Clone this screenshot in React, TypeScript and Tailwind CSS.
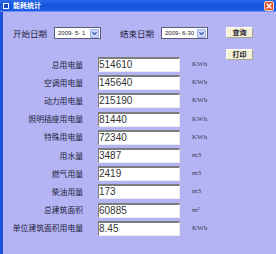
import { ChevronDown, X } from "lucide-react";

type Row = {
  label: string;
  value: string;
  unit: string;
};

const rows: Row[] = [
  { label: "总用电量", value: "514610", unit: "KWh" },
  { label: "空调用电量", value: "145640", unit: "KWh" },
  { label: "动力用电量", value: "215190", unit: "KWh" },
  { label: "照明插座用电量", value: "81440", unit: "KWh" },
  { label: "特殊用电量", value: "72340", unit: "KWh" },
  { label: "用水量", value: "3487", unit: "m3" },
  { label: "燃气用量", value: "2419", unit: "m3" },
  { label: "柴油用量", value: "173", unit: "m3" },
  { label: "总建筑面积", value: "60885", unit: "m²" },
  { label: "单位建筑面积用电量", value: "8.45", unit: "KWh" },
];

const cjk = "font-['Noto_Sans_CJK_SC','Liberation_Sans',sans-serif]";

// small date combo box, xp style
function DateBox({ value }: { value: string }) {
  return (
    <div className="w-[47px] h-[12px] flex items-center bg-white border border-[#5a5a7a]">
      <span className="flex-1 pl-[3px] text-[6px] leading-none text-[#222] font-['Liberation_Sans',sans-serif] whitespace-pre">
        {value}
      </span>
      <div className="w-[9px] h-[9px] mr-[1px] rounded-[1px] bg-[#c6d4f7] border border-[#9fb4ea] grid place-items-center">
        <ChevronDown className="w-[7px] h-[7px] text-[#3050a8]" strokeWidth={4} />
      </div>
    </div>
  );
}

function XpButton({ text }: { text: string }) {
  return (
    <div
      className={`w-[27px] h-[11px] grid place-items-center bg-[#f3f0d6] border-t border-l border-[#fffdf0] border-r border-b border-r-[#a9a690] border-b-[#a9a690] text-[7px] leading-none font-bold text-[#1a1a30] ${cjk}`}
    >
      {text}
    </div>
  );
}

export default function App() {
  return (
    <div className="w-[276px] h-[254px] flex flex-col bg-[#b4b4f4] overflow-hidden">
      {/* title bar */}
      <div className="h-[12px] flex items-center bg-gradient-to-b from-[#2a68ea] via-[#1454dc] to-[#1e5ee6] border-b border-[#6f8ff0]">
        <div className="ml-[3px] w-[6px] h-[6px] bg-[#1846c8] border border-white" />
        <span className={`ml-[4px] text-[7px] leading-none font-bold text-white ${cjk}`}>能耗统计</span>
        <div className="ml-auto mr-[2px] w-[10px] h-[10px] rounded-[2px] bg-[#e2542c] border border-[#f7d0c0] grid place-items-center">
          <X className="w-[8px] h-[8px] text-white" strokeWidth={4} />
        </div>
      </div>

      {/* body */}
      <div className="flex-1 flex border-l-[3px] border-[#1a52dc]">
        <div className="flex flex-col">
          {/* date row */}
          <div className="mt-[15px] h-[12px] flex items-center">
            <span className={`ml-[10px] text-[8.5px] leading-none text-[#1c1c38] ${cjk}`}>开始日期</span>
            <div className="ml-[7px]">
              <DateBox value="2009- 5- 1" />
            </div>
            <span className={`ml-[19px] text-[8.5px] leading-none text-[#1c1c38] ${cjk}`}>结束日期</span>
            <div className="ml-[7px]">
              <DateBox value="2009- 6-30" />
            </div>
          </div>

          {/* value rows */}
          <div className="mt-[18px] flex flex-col gap-[3.2px]">
            {rows.map((row) => (
              <div key={row.label} className="h-[15px] flex items-center">
                <span className={`w-[80px] text-right text-[7.8px] leading-none text-[#1c1c38] ${cjk}`}>{row.label}</span>
                <div className="ml-[15px] w-[82px] h-[15px] flex items-center bg-white border-t-2 border-l border-[#7c7c7c] border-r border-b border-r-[#ececec] border-b-[#ececec]">
                  <span className="text-[10px] leading-none text-[#333] font-['Liberation_Sans',sans-serif]">{row.value}</span>
                </div>
                <span className="ml-[12px] text-[7px] leading-none text-[#3a3a55] font-['Liberation_Serif',serif]">{row.unit}</span>
              </div>
            ))}
          </div>
        </div>

        {/* buttons */}
        <div className="ml-[18px] mt-[15px] flex flex-col gap-[11px]">
          <XpButton text="查询" />
          <XpButton text="打印" />
        </div>
      </div>
    </div>
  );
}
